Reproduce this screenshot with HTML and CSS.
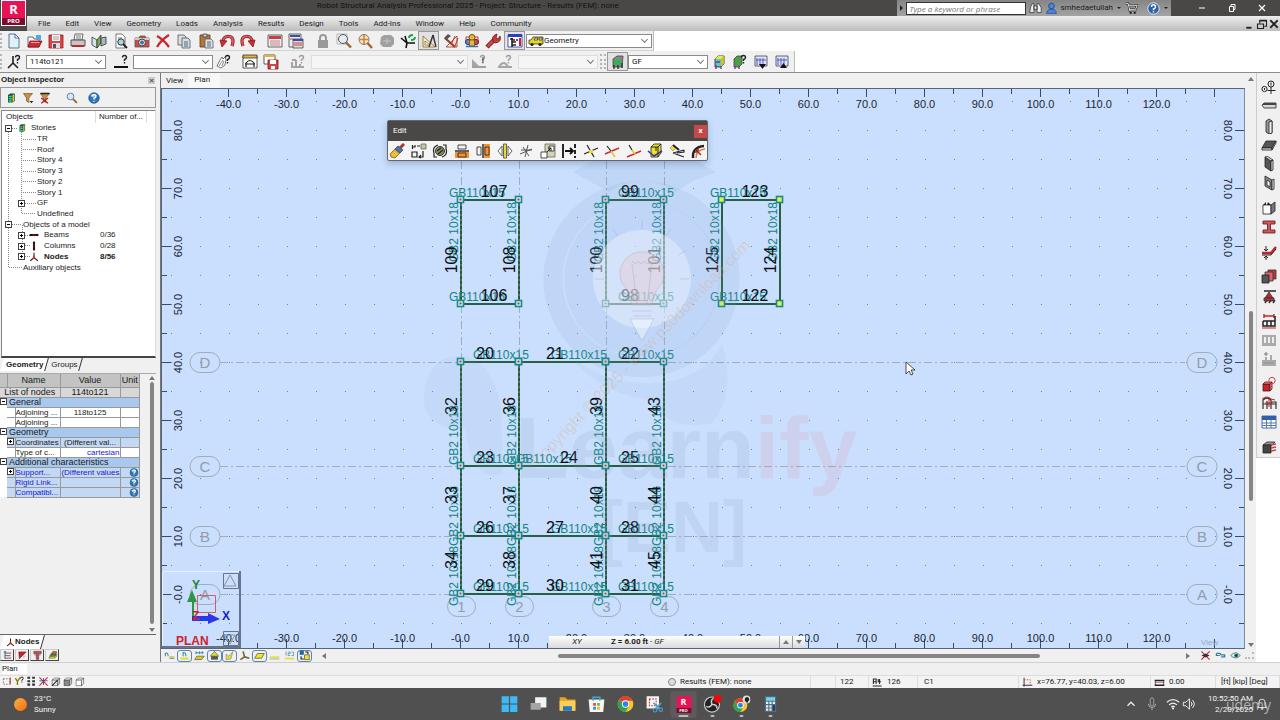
FILE: index.html
```html
<!DOCTYPE html>
<html lang="en">
<head>
    <meta charset="UTF-8">
    <title>Robot Structural Analysis Professional 2025</title>
    <link rel="stylesheet" href="styles.css">
</head>
<body>

    <!-- Title bar and main menu -->
    <header class="header">
        <div class="logo"><b>R</b><small>PRO</small></div>
        <div class="titlebar">
            <div class="title">Robot Structural Analysis Professional 2025 - Project: Structure - Results (FEM): none</div>
            <div class="infobar">
                <span class="caret-right"></span>
                <input type="text" placeholder="Type a keyword or phrase" aria-label="Search">
                <button data-icon="binoculars" aria-label="Find"></button>
                <button class="user"><i data-icon="user"></i>smhedaetullah<span class="caret"></span></button>
                <button data-icon="cart" aria-label="Store"></button>
                <button class="help"><i data-icon="help"></i><span class="caret"></span></button>
            </div>
            <div class="window-buttons">
                <button data-icon="min" aria-label="Minimize"></button>
                <button data-icon="restore" aria-label="Restore"></button>
                <button data-icon="close" aria-label="Close"></button>
            </div>
        </div>
        <nav class="menubar">
            <a href="#">File</a>
            <a href="#">Edit</a>
            <a href="#">View</a>
            <a href="#">Geometry</a>
            <a href="#">Loads</a>
            <a href="#">Analysis</a>
            <a href="#">Results</a>
            <a href="#">Design</a>
            <a href="#">Tools</a>
            <a href="#">Add-Ins</a>
            <a href="#">Window</a>
            <a href="#">Help</a>
            <a href="#">Community</a>
            <div class="mdi-buttons">
                <button data-icon="mdimin" aria-label="Minimize view"></button>
                <button data-icon="mdirestore" aria-label="Restore view"></button>
                <button data-icon="mdiclose" aria-label="Close view"></button>
            </div>
        </nav>
    </header>

    <!-- Standard toolbar -->
    <div class="toolbar">
        <span class="handle"></span>
        <div class="group"><button data-icon="new"></button><button data-icon="open"></button><button data-icon="save"></button></div>
        <div class="group"><button data-icon="print"></button><button data-icon="book"></button><button data-icon="preview"></button></div>
        <div class="group"><button data-icon="camera"></button><button data-icon="delete"></button><button data-icon="copy"></button></div>
        <div class="group"><button data-icon="paste"></button><button data-icon="undo"></button><button data-icon="redo"></button></div>
        <div class="group spaced"><button data-icon="calc"></button><button data-icon="calc2"></button></div>
        <div class="group spaced"><button data-icon="lock"></button><button data-icon="zoom"></button><button data-icon="zoomall"></button></div>
        <div class="group"><button data-icon="blob"></button><button data-icon="refresh"></button><button data-icon="triangle" class="active"></button></div>
        <div class="group"><button data-icon="hammer"></button><button data-icon="gizmo"></button><button data-icon="wrench"></button></div>
        <div class="group"><button data-icon="inspector" class="active"></button></div>
        <div class="combo layout">
            <i data-icon="car"></i>
            <select aria-label="Layout"><option>Geometry</option></select>
        </div>
    </div>

    <!-- Selection and stories toolbars -->
    <div class="toolbar selection">
        <span class="handle"></span>
        <button data-icon="nodesel"></button>
        <div class="combo"><select aria-label="Node selection"><option>114to121</option></select></div>
        <button data-icon="barsel" class="after-combo"></button>
        <div class="combo"><select aria-label="Bar selection"><option></option></select></div>
        <button data-icon="hand"></button>
        <div class="group spaced"><button data-icon="frame"></button><button data-icon="framesave"></button></div>
        <div class="group spaced"><button data-icon="loadcase"></button></div>
        <div class="combo disabled wide"><select aria-label="Load case" disabled><option></option></select></div>
        <button data-icon="mode"></button>
        <div class="group spaced"><button data-icon="mode2"></button></div>
        <div class="combo disabled"><select aria-label="Mode" disabled><option></option></select></div>
        <span class="handle double"></span>
        <button data-icon="building" class="active"></button>
        <div class="combo story"><select aria-label="Story"><option>GF</option></select></div>
        <button data-icon="storycolor"></button>
        <button data-icon="storyask"></button>
        <button data-icon="storydown"></button>
        <button data-icon="storyup"></button>
    </div>

    <main class="main">
        <!-- Object inspector -->
        <aside class="inspector">
            <h2>Object Inspector <button aria-label="Close inspector">×</button></h2>
            <div class="inspector-tools">
                <button data-icon="story"></button>
                <button data-icon="filter"></button>
                <button data-icon="filterx"></button>
                <button data-icon="lens"></button>
                <button data-icon="helpball"></button>
            </div>
            <div class="tree-box">
                <div class="tree-head"><span>Objects</span><span>Number of...</span></div>
                <ul class="tree">
                    <li class="l1"><i class="box minus"></i><i data-icon="story"></i>Stories</li>
                    <li class="l3">TR</li>
                    <li class="l3">Roof</li>
                    <li class="l3">Story 4</li>
                    <li class="l3">Story 3</li>
                    <li class="l3">Story 2</li>
                    <li class="l3">Story 1</li>
                    <li class="l2"><i class="box"></i>GF</li>
                    <li class="l3">Undefined</li>
                    <li class="l1 root"><i class="box minus"></i>Objects of a model</li>
                    <li class="l2 obj"><i class="box"></i><i data-icon="beam"></i>Beams<span>0/36</span></li>
                    <li class="l2 obj"><i class="box"></i><i data-icon="column"></i>Columns<span>0/28</span></li>
                    <li class="l2 obj picked"><i class="box"></i><i data-icon="node"></i>Nodes<span>8/56</span></li>
                    <li class="aux">Auxiliary objects</li>
                </ul>
                <svg class="tree-lines" aria-hidden="true"><path d="M6.500 5V144.500H20M19.500 9V90.500H34M8 5.500H16M21 16.500H34M21 26.500H34M21 37.500H34M21 48.500H34M21 58.500H34M21 69.500H34M21 80.500H34M8 101.500H20M20.500 102V133M21 112.500H28M21 122.500H28M21 133.500H28"/></svg>
            </div>
            <div class="tabs"><button class="on">Geometry</button><button>Groups</button></div>

            <div class="props-box">
                <table class="props">
                    <colgroup><col class="c1"><col class="c2"><col class="c3"><col class="c4"><col class="c5"></colgroup>
                    <tr class="head"><th></th><th colspan="2">Name</th><th>Value</th><th>Unit</th></tr>
                    <tr class="list"><td colspan="3">List of nodes</td><td>114to121</td><td></td></tr>
                    <tr class="section"><td><i class="box minus"></i></td><td colspan="4">General</td></tr>
                    <tr><td></td><td></td><td>Adjoining ...</td><td class="mid">118to125</td><td></td></tr>
                    <tr><td></td><td></td><td>Adjoining ...</td><td></td><td></td></tr>
                    <tr class="section"><td><i class="box minus"></i></td><td colspan="4">Geometry</td></tr>
                    <tr class="blue"><td></td><td><i class="box"></i></td><td>Coordinates</td><td class="mid">(Different val...</td><td></td></tr>
                    <tr><td></td><td></td><td>Type of c...</td><td class="end link">cartesian</td><td></td></tr>
                    <tr class="section"><td><i class="box minus"></i></td><td colspan="4">Additional characteristics</td></tr>
                    <tr class="blue"><td></td><td><i class="box"></i></td><td class="link">Support...</td><td class="end link">(Different values</td><td class="end"><i data-icon="helpball"></i></td></tr>
                    <tr class="blue"><td></td><td></td><td class="link">Rigid Link...</td><td></td><td class="end"><i data-icon="helpball"></i></td></tr>
                    <tr class="blue"><td></td><td></td><td class="link">Compatibl...</td><td></td><td class="end"><i data-icon="helpball"></i></td></tr>
                </table>
                <div class="vscroll"><span class="up"></span><span class="thumb"></span><span class="down"></span></div>
            </div>
            <div class="tabs bottom"><button class="on"><i data-icon="node"></i>Nodes</button></div>
            <div class="inspector-icons">
                <button data-icon="treeview"></button><button data-icon="redsec"></button><button data-icon="redcol"></button><button data-icon="layers"></button>
            </div>
        </aside>

        <!-- Plan view -->
        <section class="view">
            <div class="view-tabs"><button>View</button><button class="on">Plan</button></div>
            <div class="canvas-row">
                <div class="canvas" id="canvas">
                    <svg id="plan" class="plan" role="img" aria-label="Plan at Z = 6.00 ft"></svg>

                    <div class="palette">
                        <div class="palette-title">Edit<button aria-label="Close palette">x</button></div>
                        <div class="palette-tools">
                            <button data-icon="brush"></button><button data-icon="move"></button><button data-icon="rotate"></button>
                            <button data-icon="mirrorh"></button><button data-icon="mirrorv"></button><button data-icon="mirror"></button>
                            <button data-icon="star"></button><button data-icon="scale"></button><button data-icon="extendto"></button>
                            <button data-icon="intersect"></button><button data-icon="trim"></button><button data-icon="extend"></button>
                            <button data-icon="cube"></button><button data-icon="chamfer"></button><button data-icon="fillet"></button>
                        </div>
                    </div>

                    <div class="level">
                        <span class="plane">XY</span>
                        <span class="z"><b>Z = 6.00 ft</b> - <em>GF</em></span>
                        <button aria-label="Level up"><span class="up"></span></button>
                        <button aria-label="Level down"><span class="down"></span></button>
                    </div>
                </div>
                <div class="vscroll main-scroll"><span class="up"></span><span class="thumb"></span><span class="down"></span></div>
            </div>
            <div class="view-bar">
                <button data-icon="vnode"></button>
                <button data-icon="vnum" class="round"></button>
                <button data-icon="vsec"></button>
                <button data-icon="vsup" class="round"></button>
                <button data-icon="vload" class="round"></button>
                <button data-icon="vaxis"></button>
                <button data-icon="vpanel" class="round"></button>
                <button data-icon="vyellow"></button>
                <button data-icon="v123"></button>
                <button data-icon="vattr" class="round"></button>
                <div class="hscroll"><span class="left"></span><span class="track"><span class="thumb"></span></span><span class="right"></span></div>
                <button data-icon="cutoff"></button>
                <button data-icon="glasses"></button>
                <button data-icon="eye"></button>
                <span class="grip"></span>
            </div>
        </section>

        <!-- Structure definition tools -->
        <div class="side">
            <div class="side-tools">
                <button data-icon="axes"></button>
                <button data-icon="sbeam"></button>
                <button data-icon="scol"></button>
                <button data-icon="slab"></button>
                <button data-icon="wall"></button>
                <button data-icon="opening"></button>
                <button data-icon="solid" class="sep"></button>
                <button data-icon="isection"></button>
                <button data-icon="offset" class="sep"></button>
                <button data-icon="thick" class="sep"></button>
                <button data-icon="support"></button>
                <button data-icon="loads" class="sep"></button>
                <button data-icon="graytable"></button>
                <button data-icon="graychart"></button>
                <button data-icon="redcube" class="sep"></button>
                <button data-icon="redframe"></button>
                <button data-icon="table"></button>
                <button data-icon="library" class="sep"></button>
            </div>
        </div>
    </main>

    <div class="view-name"><span>Plan</span></div>

    <!-- Status bar -->
    <footer class="status">
        <div class="status-icons">
            <i data-icon="st1"></i><i data-icon="st2"></i><i data-icon="st3"></i><i data-icon="st4"></i><i data-icon="boxa"></i><i data-icon="boxb"></i><i data-icon="boxc"></i>
        </div>
        <div class="cell result"><i class="led"></i>Results (FEM): none</div>
        <div class="cell blank"></div>
        <div class="cell count">122</div>
        <div class="cell bars"><i data-icon="barnum"></i>126</div>
        <div class="cell case">C1</div>
        <div class="cell coords"><i data-icon="coord"></i>x=76.77, y=40.03, z=6.00</div>
        <div class="cell dist"><i data-icon="dist"></i>0.00</div>
        <div class="cell units">[ft] [kip] [Deg]</div>
    </footer>

    <!-- Windows taskbar -->
    <div class="taskbar">
        <div class="weather"><span class="sun"></span><div>23°C<br>Sunny</div></div>
        <div class="apps">
            <button data-icon="windows"></button>
            <button data-icon="taskview"></button>
            <button data-icon="folder"></button>
            <button data-icon="store"></button>
            <button data-icon="chrome"></button>
            <button data-icon="snip"></button>
            <button class="current"><span class="logo mini"><b>R</b><small>PRO</small></span></button>
            <button data-icon="obs" class="running"></button>
            <button data-icon="chrome2" class="running"></button>
            <button data-icon="calculator" class="running"></button>
        </div>
        <div class="tray">
            <i data-icon="chevron"></i><i data-icon="mic"></i><i data-icon="wifi"></i><i data-icon="sound"></i>
            <div class="clock">10:52:50 AM<br>2/20/2025</div>
            <i data-icon="bell"></i>
            <span class="brand">ûdemy</span>
        </div>
    </div>

    <script src="icons.js"></script>
    <script src="plan.js"></script>
</body>
</html>
```
FILE: styles.css
```css
/* General */
* {
    box-sizing: border-box;
}

body {
    margin: 0;
    height: 100vh;
    display: flex;
    flex-direction: column;
    overflow: hidden;
    background: #fff;
    color: #1a1a1a;
    font-family: Roboto, "Open Sans", sans-serif;
    font-size: 8px;
    line-height: 10px;
}

button {
    margin: 0;
    padding: 0;
    border: 0;
    background: none;
    color: inherit;
    font: inherit;
    display: flex;
    align-items: center;
    justify-content: center;
    flex-shrink: 0;
}

i {
    display: inline-flex;
    font-style: normal;
    flex-shrink: 0;
}

i svg,
button svg {
    width: 16px;
    height: 16px;
    display: block;
}

/* Header */
.header {
    display: grid;
    grid-template-columns: 27px 1fr;
    grid-template-rows: 16px 15px;
    background: #4a4846;
}

.logo {
    grid-row: 1 / 3;
    margin: 0 1px 5px;
    display: flex;
    flex-direction: column;
    align-items: center;
    background: linear-gradient(#e61455 70%, #7d0a30 70%);
    border: 1px solid #fff;
    color: #fff;
    font-family: "Open Sans", sans-serif;
}

.logo b {
    font-size: 13px;
    line-height: 17px;
}

.logo small {
    font-size: 6px;
    line-height: 7px;
    font-weight: bold;
}

.titlebar {
    display: flex;
    align-items: center;
    background: #4a4846;
}

.title {
    flex: 1;
    padding-left: 290px;
    line-height: 11px;
    align-self: flex-start;
    color: #111;
    white-space: nowrap;
}

.infobar {
    display: flex;
    align-items: center;
    align-self: flex-start;
    height: 16px;
    padding-right: 2px;
    gap: 3px;
    background: linear-gradient(#858585, #a3a3a3);
    white-space: nowrap;
}

.infobar input {
    width: 120px;
    height: 13px;
    padding: 0 2px;
    border: 1px solid #333;
    background: #fff;
    font: italic 8px/10px "Open Sans", sans-serif;
}

.infobar svg {
    width: 13px;
    height: 13px;
}

.infobar .user,
.infobar .help {
    gap: 2px;
}

.infobar .help {
    margin-left: 6px;
}

.caret-right {
    margin-left: 3px;
    border: 3px solid transparent;
    border-left-color: #222;
    border-right: 0;
}

.caret {
    margin: 2px 1px 0 2px;
    border: 2px solid transparent;
    border-top-color: #222;
}

.window-buttons {
    display: flex;
    gap: 14px;
    padding: 0 10px 0 23px;
    color: #fff;
}

.menubar {
    display: flex;
    align-items: center;
    gap: 15px;
    padding-left: 11px;
    background: linear-gradient(#ededed, #bdbdbd);
}

.menubar a {
    color: #222;
    text-decoration: none;
}

.mdi-buttons {
    display: flex;
    margin-left: auto;
}

.mdi-buttons svg {
    width: 12px;
    height: 12px;
}

/* Toolbars */
.toolbar {
    align-self: flex-start;
    display: flex;
    align-items: center;
    height: 20px;
    padding-right: 1px;
    background: #f0f0f0;
    border-right: 1px solid #bbb;
    border-bottom: 1px solid #d4d4d4;
}

.toolbar.selection {
    height: 21px;
    padding-right: 2px;
    border-bottom: 0;
}

.toolbar button {
    width: 21px;
    height: 19px;
}

.toolbar button.active {
    background: #e2e2e2;
    border: 1px solid #999;
}

.group {
    display: flex;
    margin-right: 1px;
}

.group.spaced {
    margin-left: 5px;
}

.handle {
    width: 3px;
    height: 15px;
    border-left: 2px dotted #b4b4b4;
}

.handle.double {
    width: 6px;
    margin: 0 1px 0 2px;
    border-right: 2px dotted #b4b4b4;
}

.combo {
    position: relative;
    width: 80px;
    height: 14px;
    display: flex;
    margin-left: 2px;
    background: #fff;
    border: 1px solid #8a8a8a;
}

.combo select {
    appearance: none;
    flex: 1;
    min-width: 0;
    padding: 0 3px;
    border: 0;
    background: none;
    color: #111;
    font: 8px/10px Roboto, sans-serif;
}

.combo::after {
    content: '';
    position: absolute;
    top: 2px;
    right: 4px;
    width: 4px;
    height: 4px;
    border: solid #777;
    border-width: 0 1px 1px 0;
    transform: rotate(45deg);
}

.combo.layout {
    width: 126px;
    margin-left: 0;
}

.combo.layout i {
    margin: -2px 0 0 1px;
}

.combo.layout select {
    padding-left: 0;
}

.combo.disabled {
    background: #f5f5f5;
    border-color: #ddd;
}

.combo.wide {
    width: 157px;
}

.combo.story {
    margin-left: 0;
}

.after-combo {
    margin-left: 4px;
}

/* Main area */
.main {
    flex: 1;
    min-height: 0;
    display: flex;
    border-top: 1px solid #8c8c8c;
}

/* Object inspector */
.inspector {
    width: 161px;
    display: flex;
    flex-direction: column;
    background: #f0f0f0;
    border-right: 1px solid #777;
    font-family: "Liberation Sans", Arial, sans-serif;
}

.inspector h2 {
    display: flex;
    align-items: center;
    justify-content: space-between;
    height: 14px;
    margin: 0;
    padding: 0 5px 0 1px;
    font-size: 8px;
    line-height: 14px;
}

.inspector h2 button {
    width: 7px;
    height: 7px;
    background: #ccc;
    color: #555;
    line-height: 7px;
}

.inspector-tools {
    display: flex;
    height: 21px;
    margin-right: 4px;
    padding-left: 1px;
    border: 1px solid #999;
}

.inspector-tools button {
    width: 17px;
}

.inspector-tools svg {
    width: 12px;
    height: 12px;
}

.inspector-tools button:nth-child(4) {
    margin-left: 10px;
}

.inspector-tools button:nth-child(5) {
    margin-left: 5px;
}

.tree-box {
    position: relative;
    flex: 0 0 248px;
    margin: 2px 4px 0 1px;
    background: #fff;
    border: 1px solid #888;
    border-bottom: 2px solid #444;
    border-right-color: #ddd;
}

.tree-head {
    display: flex;
    height: 12px;
    line-height: 12px;
}

.tree-head span:first-child {
    width: 94px;
    padding-left: 4px;
    border-right: 1px solid #ddd;
}

.tree-head span:last-child {
    padding: 0 3px;
    border-right: 1px solid #ddd;
}

.tree {
    display: grid;
    grid-auto-rows: 1fr;
    height: 150px;
    margin: 0;
    padding: 0;
    list-style: none;
}

.tree li {
    position: relative;
    z-index: 1;
    display: flex;
    align-items: center;
}

.tree li i svg {
    width: 10px;
    height: 10px;
}

.tree .l1 {
    padding-left: 3px;
}

.tree .l1 i[data-icon] {
    margin: 0 4px 0 5px;
}

.tree .l1.root .box {
    margin-right: 11px;
}

.tree .l2 {
    padding-left: 16px;
}

.tree .l2 .box {
    margin-right: 12px;
}

.tree .l2.obj .box {
    margin-right: 4px;
}

.tree .l2.obj i[data-icon] {
    margin-right: 5px;
}

.tree .l3 {
    padding-left: 35px;
}

.tree .aux {
    padding-left: 21px;
}

.tree span {
    position: absolute;
    left: 98px;
}

.tree .picked {
    font-weight: bold;
}

.tree-lines {
    position: absolute;
    top: 12px;
    left: 0;
    width: 40px;
    height: 150px;
    fill: none;
    stroke: #888;
    stroke-dasharray: 1 1;
}

.box {
    position: relative;
    width: 7px;
    height: 7px;
    background: #fff;
    border: 1px solid #444;
}

.box::before,
.box:not(.minus)::after {
    content: '';
    position: absolute;
    top: 2px;
    left: 1px;
    width: 3px;
    height: 1px;
    background: #000;
}

.box:not(.minus)::after {
    transform: rotate(90deg);
}

.tabs {
    display: flex;
    height: 13px;
    margin-right: 4px;
    padding-left: 2px;
}

.tabs button {
    position: relative;
    z-index: 0;
    padding: 0 4px;
}

.tabs button::before {
    content: '';
    position: absolute;
    z-index: -1;
    inset: 0;
    border-right: 1px solid #333;
    transform: skewX(-16deg);
}

.tabs .on {
    font-weight: bold;
}

.tabs .on::before {
    background: #fff;
}

.tabs svg {
    width: 9px;
    height: 9px;
}

.props-box {
    flex: 1;
    min-height: 0;
    display: flex;
    justify-content: space-between;
    margin: 2px 4px 0 0;
    border-top: 1px solid #aaa;
    border-bottom: 1px solid #666;
}

.props {
    width: 140px;
    height: 123px;
    flex-shrink: 0;
    table-layout: fixed;
    border-collapse: collapse;
    line-height: 9px;
    white-space: nowrap;
}

.props .c1 {
    width: 7px;
}

.props .c2 {
    width: 8px;
}

.props .c3 {
    width: 45px;
}

.props .c4 {
    width: 60px;
}

.props td,
.props th {
    height: 10px;
    padding: 0;
    overflow: hidden;
    background: #fff;
    border: 1px solid #999;
    border-width: 0 1px 1px 0;
}

.props .head th {
    height: 13px;
    background: #c3c3c3;
    font-size: 9px;
    font-weight: normal;
}

.props .list td {
    background: #d8d8d8;
    text-align: center;
    font-size: 9px;
}

.props tr:not(.head) td:first-child:not([colspan]) {
    background: #fff;
    border: 0;
}

.props tr.section td:last-child {
    padding-left: 2px;
    background: #a9c8ee;
    font-size: 9px;
}

.props tr.blue td {
    background: #c3d9f3;
}

.props .mid {
    text-align: center;
}

.props .end {
    text-align: right;
}

.props .link {
    color: #1a1ad0;
}

.props i {
    vertical-align: top;
}

.props i svg {
    width: 10px;
    height: 9px;
}

.vscroll {
    display: flex;
    flex-direction: column;
    align-items: center;
    width: 9px;
    padding: 2px 0;
    background: #f0f0f0;
}

.up,
.down {
    border: 3px solid transparent;
}

.up {
    border-bottom: 4px solid #777;
    border-top: 0;
}

.down {
    border-top: 4px solid #777;
    border-bottom: 0;
}

.vscroll .thumb {
    flex: 1;
    width: 4px;
    margin: 2px 0 4px;
    border-radius: 2px;
    background: #858585;
}

.tabs.bottom {
    height: 14px;
}

.inspector-icons {
    display: flex;
    gap: 1px;
    height: 13px;
}

.inspector-icons button {
    width: 14px;
    height: 12px;
    border: 1px solid #ccc;
    border-right-color: #444;
    border-bottom-color: #444;
}

.inspector-icons svg {
    width: 11px;
    height: 10px;
}

/* Plan view */
.view {
    flex: 1;
    min-width: 0;
    display: flex;
    flex-direction: column;
    background: #f0f0f0;
}

.view-tabs {
    display: flex;
    height: 15px;
}

.view-tabs button {
    padding: 0 5px;
}

.view-tabs .on {
    padding: 0 10px 2px 6px;
    background: #f8f8f8;
}

.canvas-row {
    flex: 1;
    min-height: 0;
    display: flex;
}

.canvas {
    position: relative;
    flex: 1;
    min-width: 0;
    background: #c9dffd;
    border: 1px solid #57657c;
    border-right-color: #7d8ba3;
    overflow: hidden;
}

.plan {
    display: block;
    width: 100%;
    height: 100%;
    font-family: "Liberation Sans", Arial, sans-serif;
}

.plan .dot {
    fill: #6a7fc0;
}

.plan .tick {
    stroke: #3b4a66;
    fill: none;
}

.plan .ruler {
    fill: #1c2636;
    font-size: 11px;
    text-anchor: middle;
}

.plan .axis {
    stroke: #a3abb9;
    stroke-dasharray: 8 3 2 3;
}

.plan .bubble {
    fill: none;
    stroke: #a3abb9;
}

.plan .bubble-text {
    fill: #959ca8;
    font-size: 15px;
    text-anchor: middle;
}

.plan .member {
    stroke: #467a5c;
    stroke-width: 2;
}

.plan .member.plain {
    stroke: #2b5f45;
}

.plan .member-dash {
    stroke: #17301f;
    stroke-dasharray: 3 2;
}

.plan .section {
    fill: #128484;
    font-size: 12px;
}

.plan .number {
    fill: #0b0f14;
    font-size: 16px;
    text-anchor: middle;
}

.plan .node {
    fill: #e9f1fb;
    stroke: #168a8a;
}

.plan .node.selected {
    fill: #ecf04a;
}

.plan .node-dot {
    fill: #a03c3c;
}

.plan .mark {
    font-weight: bold;
}

.main-scroll {
    width: 11px;
    margin-top: -13px;
}

.main-scroll .thumb {
    flex: 0 0 190px;
    margin: 230px 0 auto;
}

/* Edit palette */
.palette {
    position: absolute;
    top: 31px;
    left: 225px;
    width: 321px;
    background: #f4f4f4;
    border: 1px solid #666;
    border-radius: 2px;
    box-shadow: 0 3px 6px rgba(60, 80, 120, 0.3);
}

.palette-title {
    display: flex;
    align-items: center;
    justify-content: space-between;
    height: 20px;
    padding-left: 5px;
    background: #4a4846;
    color: #fff;
}

.palette-title button {
    width: 13px;
    height: 13px;
    background: #c8474b;
    font-weight: bold;
}

.palette-tools {
    display: flex;
    justify-content: space-between;
    height: 19px;
    padding: 0 1px;
}

/* Level selector */
.level {
    position: absolute;
    left: 387px;
    bottom: 0;
    display: flex;
    align-items: center;
    width: 256px;
    height: 12px;
    background: linear-gradient(#fff, #dadada);
}

.level .plane {
    width: 56px;
    text-align: center;
    font-style: italic;
}

.level .z {
    flex: 1;
    padding-left: 6px;
}

.level button {
    width: 13px;
    height: 12px;
    border-left: 1px solid #999;
}

/* Bar under the plan */
.view-bar {
    display: flex;
    align-items: center;
    height: 13px;
    padding: 0 2px 0 1px;
}

.view-bar button {
    width: 15px;
    height: 12px;
}

.view-bar svg {
    width: 13px;
    height: 11px;
}

.view-bar .round {
    border: 1px solid #5b87ad;
    border-radius: 3px;
}

.hscroll {
    flex: 1;
    display: flex;
    align-items: center;
    margin: 0 8px 0 10px;
}

.hscroll .left,
.hscroll .right {
    border: 3px solid transparent;
}

.hscroll .left {
    border-right: 4px solid #777;
    border-left: 0;
}

.hscroll .right {
    border-left: 4px solid #777;
    border-right: 0;
}

.hscroll .track {
    flex: 1;
}

.hscroll .thumb {
    display: block;
    width: 56%;
    height: 4px;
    margin-left: 27%;
    border-radius: 2px;
    background: #858585;
}

.grip {
    width: 9px;
    height: 7px;
    margin-left: 2px;
    border-right: 2px dotted #bbb;
    border-bottom: 2px dotted #bbb;
}

/* Right toolbar */
.side {
    width: 24px;
    background: #fff;
}

.side-tools {
    display: flex;
    flex-direction: column;
    align-items: center;
    padding: 5px 0 1px;
    background: #f0f0f0;
    border: 1px solid #ccc;
    border-width: 0 0 1px 1px;
}

.side-tools button {
    height: 19px;
}

.side-tools .sep {
    margin-top: 6px;
}

/* Status area */
.view-name {
    height: 14px;
    padding: 1px 2px;
    background: #f0f0f0;
    border-top: 1px solid #d0d0d0;
    border-bottom: 1px solid #ddd;
}

.view-name span {
    display: block;
    width: 25px;
    background: #fff;
}

.status {
    display: flex;
    height: 12px;
    line-height: 12px;
    background: #f3f3f3;
    white-space: nowrap;
}

.status i svg {
    width: 11px;
    height: 11px;
}

.status-icons {
    flex: 1;
    display: flex;
    gap: 1px;
    padding-left: 2px;
}

.cell {
    display: flex;
    align-items: center;
    gap: 4px;
    border-right: 1px solid #ddd;
}

.result {
    width: 143px;
}

.led {
    width: 8px;
    height: 8px;
    border: 1px solid #888;
    border-radius: 50%;
    background: #ddd;
}

.blank {
    width: 25px;
}

.count {
    width: 33px;
    padding-left: 4px;
}

.bars {
    width: 49px;
    padding-left: 3px;
}

.case {
    width: 101px;
    padding-left: 6px;
}

.coords {
    width: 132px;
    padding-left: 3px;
}

.dist {
    width: 65px;
    padding-left: 3px;
}

.units {
    width: 64px;
    padding-left: 5px;
}

/* Taskbar */
.taskbar {
    position: relative;
    display: flex;
    align-items: center;
    justify-content: space-between;
    height: 32px;
    padding: 0 11px 0 14px;
    background: #505050;
    color: #f4f4f4;
}

.weather {
    display: flex;
    align-items: center;
    gap: 7px;
    line-height: 11px;
}

.sun {
    width: 13px;
    height: 13px;
    border-radius: 50%;
    background: linear-gradient(135deg, #ffb13c, #ef6a1b);
}

.apps {
    position: absolute;
    left: 50%;
    display: flex;
    gap: 3px;
    transform: translateX(-50%);
}

.apps button {
    position: relative;
    width: 26px;
    height: 27px;
}

.apps svg {
    width: 18px;
    height: 18px;
}

.apps .current {
    background: #5e5a5b;
    border-radius: 3px;
}

.apps .current::after,
.apps .running::after {
    content: '';
    position: absolute;
    bottom: 1px;
    width: 4px;
    height: 2px;
    border-radius: 1px;
    background: #bbb;
}

.apps .current::after {
    width: 10px;
}

.logo.mini {
    width: 15px;
    height: 17px;
    margin: 0;
    border: 0;
}

.mini b {
    font-size: 9px;
    line-height: 12px;
}

.mini small {
    font-size: 4px;
    line-height: 5px;
}

.tray {
    position: relative;
    display: flex;
    align-items: center;
    gap: 2px;
}

.tray svg {
    width: 14px;
    height: 14px;
}

.tray i:nth-child(2) {
    margin: 0 5px;
}

.clock {
    margin-left: 10px;
    line-height: 11px;
    text-align: right;
}

.brand {
    position: absolute;
    right: -2px;
    top: 4px;
    color: rgba(255, 255, 255, 0.55);
    font: 14px/16px "Open Sans", sans-serif;
}
```
FILE: icons.js
```js
// Icon shapes, all drawn on a 16x16 box
const box3d = (a, b, c) => `<g stroke="#222" stroke-width=".7"><path fill="${a}" d="M3 6l3-3h8l-3 3z"/><path fill="${b}" d="M3 6h8v8H3z"/><path fill="${c}" d="M11 6l3-3v8l-3 3z"/></g>`;
const line = (d, color = '#222', width = 1) => `<path d="${d}" fill="none" stroke="${color}" stroke-width="${width}"/>`;
const fill = (d, color, stroke = 'none') => `<path d="${d}" fill="${color}" stroke="${stroke}" stroke-width=".8"/>`;
const circle = (x, y, r, color, stroke = 'none') => `<circle cx="${x}" cy="${y}" r="${r}" fill="${color}" stroke="${stroke}"/>`;
const ask = line('M9.500 3.500Q9.500 1.500 11.500 1.500T13.500 3.500Q13.500 5 11.500 5.500V7M11.500 8V9.500', '#222', 1.4);

const tower = fill('M4 4l3-2h6v10l-3 2H4z', '#1f4b45') + fill('M5 5h4v2H5zM5 8h4v2H5zM5 11h4v2H5z', '#2fe07a') + fill('M10 4l2-1v9l-2 1z', '#e5cf2c');
const sheet = fill('M4 1h6l3 3v11H4z', '#fff', '#555');
const chromeIcon = circle(8, 8, 7, '#f7c729') + fill('M8 8L2 4.500A7 7 0 0 1 14.500 5H8z', '#e0402f') + fill('M2 4.500A7 7 0 0 0 8 15l3-5.500L8 8z', '#2fa24f') + circle(8, 8, 3.3, '#fff') + circle(8, 8, 2.5, '#3b7ded');

const icons = {
    binoculars: fill('M2 6l2-4h2v11H1zM10 2h2l3 5v6h-5zM6 5h4v4H6z', '#eee', '#222'),
    user: circle(8, 5, 3.5, '#4a86d8', '#17438c') + fill('M2 14q0-5 6-5t6 5z', '#4a86d8', '#17438c'),
    cart: line('M1 2h3l2 9h8M4.500 4H15l-2 5H6', '#222', 2.6) + line('M1 2h3l2 9h8M4.500 4H15l-2 5H6', '#e8e8e8', 1.2) + circle(7, 13.500, 1.4, '#222') + circle(12, 13.500, 1.4, '#222'),
    help: circle(8, 8, 7, '#2c62ad', '#fff') + line('M5.500 6Q5.500 3.500 8 3.500T10.500 6Q10.500 7.500 8 8.500V10M8 11.500V13', '#fff', 1.8),
    helpball: circle(8, 8, 7, '#3076ba', '#1c4e87') + fill('M3 5q4-5 9-1l-4 4z', '#8fc3ee') + line('M5.500 6Q5.500 3.500 8 3.500T10.500 6Q10.500 7.500 8 8.500V10M8 11.500V13', '#fff', 1.8),
    min: line('M5 8h6', '#fff'),
    restore: line('M5.500 6.500h4v5h-4zM7 6.500V4.500h4v5h-1.500', '#fff'),
    close: line('M5 5l6 6M11 5l-6 6', '#fff', 1.2),
    mdimin: line('M3 13h7', '#222', 2.5),
    mdirestore: line('M2 8h8v6H2zM5 7V3h9v8h-3M5 4h9', '#222', 1.5),
    mdiclose: line('M3 3l10 10M13 3L3 13', '#222', 2.4),

    // standard toolbar
    new: fill('M3 1h6l4 4v10H3z', '#dff1fb', '#37586e') + fill('M9 1v4h4z', '#fff', '#37586e'),
    open: fill('M1 4h5l1 2h5v8H1z', '#fff', '#444') + fill('M9 2h5v5H9z', '#53a9d9') + fill('M3 8h12l-3 6H1z', '#d8272f', '#7c1217') + fill('M4 9h9l-1 1H4z', '#f2a2a0'),
    save: fill('M1 2h14v13H1z', '#dc4448', '#8d1d20') + fill('M4 2h8v6H4z', '#fff') + fill('M4 10h8v5H4z', '#ddd') + fill('M5 11h3v4H5z', '#555') + line('M5 4h6M5 6h6', '#999'),
    print: fill('M5 1h8l-1 6H4z', '#fff', '#444') + fill('M1 7h14v6H1z', '#c9c4c2', '#333') + fill('M2 12h12v2H2z', '#b22e33') + line('M6 3h5M6 5h5', '#777'),
    book: fill('M1 4l5 3v8L1 12z', '#cde7f5', '#333') + fill('M6 7l4-5v8l-4 5z', '#83a84a', '#333') + fill('M10 5l5-1v7l-5 2z', '#a4b7c6', '#333'),
    preview: sheet + line('M6 5h4M6 7h3', '#777') + circle(9, 9, 3.2, '#a9d5ea', '#333') + line('M11 11l4 4', '#222', 2),
    camera: fill('M1 5h4l1-2h5l1 2h3v9H1z', '#d4484a', '#555') + fill('M1 5h14v2H1z', '#ccc') + circle(8, 9.500, 3.5, '#ddd', '#444') + circle(8, 9.500, 2, '#397aa3'),
    delete: line('M2 3q7 4 12 11M14 2Q6 7 2 14', '#c9252c', 2.2),
    copy: fill('M2 2h6l2 2v8H2z', '#ddd', '#555') + fill('M6 5h6l2 2v8H6z', '#cfdfe6', '#555') + line('M8 9h4M8 11h4M8 13h4', '#567'),
    paste: fill('M2 2h10v12H2z', '#b87738', '#55391e') + fill('M5 1h4v3H5z', '#ccc', '#444') + fill('M7 6h6l2 2v7H7z', '#dce6ec', '#555') + line('M9 9h4M9 11h4M9 13h4', '#567'),
    undo: line('M13 13Q16 4 10 3.500T4 9', '#7c1d22', 3.2) + line('M13 13Q16 4 10 3.500T4 9', '#e2565b', 1.8) + fill('M1 7l7 1-5 6z', '#cf2c33', '#7c1d22'),
    redo: line('M3 13Q0 4 6 3.500T12 9', '#7c1d22', 3.2) + line('M3 13Q0 4 6 3.500T12 9', '#e2565b', 1.8) + fill('M15 7l-7 1 5 6z', '#cf2c33', '#7c1d22'),
    calc: fill('M1 2h14v12H1z', '#eee', '#444') + fill('M2 3h12v3H2z', '#cb3d43') + line('M3 8h10M3 10h10M3 12h10', '#b88', 1.2),
    calc2: fill('M1 1h12v13H1z', '#eee', '#444') + fill('M2 2h10v2H2z', '#3a4ea3') + fill('M5 6h10v9H5z', '#ddd', '#444') + fill('M5 6h10v2H5z', '#3a4ea3') + line('M6 10h8M6 12h8M2 6h3', '#c44'),
    lock: line('M5 8V5q0-3 3-3t3 3v3', '#999', 2) + fill('M3 7h10v8H3z', '#999'),
    zoom: fill('M1 1h10v10H1z', 'none', '#aaa') + circle(7, 6, 4.5, '#e4edf1', '#555') + line('M10 9.500l5 5', '#9a6731', 2.4),
    zoomall: circle(7, 6.500, 5, '#f3e4c9', '#777') + line('M7 2v9M2.500 6.500h9', '#d98022', 1.5) + line('M10.500 10l4.500 5', '#9a6731', 2.4),
    blob: fill('M2 4l3-2h7l3 3v6l-3 3H4l-3-3z', '#a0a0a0') + line('M4 8h8M8 5v6', '#c4c4c4'),
    refresh: line('M1 5l6 5h8M7 10l-1 5M5 3l2 7', '#111', 1.6) + line('M9 5q0-3 4-3M15 4q0 3-4 3', '#1ea34b', 2),
    triangle: fill('M2 3v11h12z', '#f4e9cf', '#8a6b2a') + fill('M4 8v4h5z', '#fff', '#8a6b2a') + line('M12 2L8 14M12 2l3 12', '#333', 1.4),
    hammer: fill('M3 14L14 3v11z', '#f4e9cf', '#8b3a2a') + line('M2 5l10 9', '#a03428', 2) + fill('M1 5l4-4 3 2-5 4z', '#555') + line('M8 12l4-9M12 13l3-8', '#c33', 1),
    gizmo: line('M2 4v6M14 4v6M2 4h4M10 4h4', '#c33', 1) + circle(8, 4.500, 3, '#e6b93e', '#6c5117') + circle(4, 9, 2.6, '#6b84c6', '#273a70') + circle(12, 9, 2.6, '#cf4a43', '#70201d') + fill('M5.500 7h5v6h-5z', '#e6b93e', '#6c5117') + line('M2 13.500h12', '#3f6dbb', 1.5),
    wrench: line('M2 14l7-7', '#6a1519', 4.4) + line('M2.500 13.500L9 7', '#d0474c', 2.6) + fill('M8 8q-2-5 4-7l-1 4 2 1 2-3q2 6-5 7z', '#c8393e', '#6a1519'),
    inspector: fill('M1 2h14v12H1z', '#fff', '#2136a8') + fill('M1 1h14v3H1z', '#2a3fc1') + line('M3 6h3M5 5v9M5 9h4M5 12h4M9 7h2', '#222', 1.6) + fill('M12 5h2v8h-2zM6 6h2v2H6z', '#c22'),
    car: fill('M1 7h2l2-3h10v7H1z', '#e4d91b', '#333') + fill('M7 5h2.500v2H6zM11 5h3v2h-3z', '#fff', '#333') + circle(4, 11.500, 1.6, '#222') + circle(12, 11.500, 1.6, '#222'),

    // selection toolbar
    nodesel: line('M7 2v7L2 14M7 9l5 5', '#222', 1.6) + ask,
    barsel: line('M1 13h14', '#111', 2) + ask,
    hand: fill('M1 12l3-6 2-3 1 2 2-2 1 3-1 5-4 3z', '#fff', '#555') + line('M3 12l4-6M6 12l2-5', '#888') + ask,
    frame: fill('M1 2h14v12H1z', '#fff', '#333') + fill('M1 1h14v3H1z', '#e3b33a', '#333') + line('M4 13V9q4-5 8 0v4M3 10h10', '#222', 1.2),
    framesave: fill('M1 1h11v9H1z', '#fff', '#333') + fill('M1 1h11v2H1z', '#e3b33a') + fill('M5 6h10v9H5z', '#d64246', '#7b1518') + fill('M7 6h6v4H7zM8 12h4v3H8z', '#fff'),
    loadcase: line('M1 13h13M2 8v5M6 6v7M10 10v3M2 6h4', '#a4a4a4', 2) + `<g opacity=".4">${ask}</g>`,
    mode: fill('M1 14V5l9 9z', '#a6a6a6') + line('M1 13h14M12 3v6', '#a0a0a0', 2) + `<g opacity=".4">${ask}</g>`,
    mode2: line('M1 13h14M2 13q5-8 9 0', '#a6a6a6', 2) + `<g opacity=".4">${ask}</g>`,
    building: fill('M3 5l4-3h6l-1 11H3z', '#888', '#444') + fill('M4 6h7v5H4z', '#2cb553') + line('M4 15v-4M8 15v-4M12 14V9', '#333', 1.4),
    storycolor: fill('M4 5l3-3h6v8l-3 3H4z', '#4bd0c1', '#222') + fill('M4 5l3-3h6l-3 3z', '#f0ea35') + fill('M10 5l3-3v8l-3 3z', '#d4bb29') + line('M5 11v4M10 12v3M5 8h4', '#8b2ca5', 1.4),
    storyask: fill('M2 5l3-3h5v8l-3 3H2z', '#4d9c4a', '#444') + line('M3 12v3M7 12v3', '#8b2ca5', 1.4) + ask,
    storydown: fill('M2 2h12v10H2z', '#dfe3ff', '#444') + line('M4 4v7M7 4v7M10 4v7M3 6h10', '#555fba') + fill('M6 10h7l-3.500 5z', '#111'),
    storyup: fill('M2 2h12v10H2z', '#dfe3ff', '#444') + line('M4 4v7M7 4v7M10 4v7M3 6h10', '#555fba') + fill('M6 14h7l-3.500-5z', '#111'),

    // object inspector
    story: tower,
    filter: fill('M2 2h12L9 8v6l-3-2V8z', '#c8943f', '#60431b') + fill('M10 12h5l-2.500 3z', '#222'),
    filterx: fill('M2 2h12L9 8v6l-3-2V8z', '#c8943f', '#60431b') + line('M3 8l9 7M12 8l-9 7', '#b3202a', 2) + line('M2 2h12', '#222', 2),
    lens: circle(6, 6, 4.5, '#d5e6fa', '#47618f') + line('M9.500 9.500l5 5', '#9a6731', 2.6),
    beam: line('M1 8h14', '#111', 3.4) + line('M4 8h8', '#b22', 1.2),
    column: line('M8 1v14', '#111', 3.4) + line('M8 4v8', '#b22', 1.2),
    node: line('M8 1v8L2 14M8 9l6 5', '#222', 1.8) + fill('M8 5l3 6H5z', '#d12b30'),
    treeview: line('M4 2v12M4 5h5M4 9h5M4 13h6M2 3h4', '#456', 1.4) + line('M9 5h5M9 9h4M10 13h4', '#b66', 2),
    redsec: fill('M2 3h12L3 14z', '#c5242c', '#651015') + fill('M9 9h5l-5 5z', '#ccc'),
    redcol: fill('M2 2h12v4h-4v9H6V6H2z', '#c84a50', '#444') + line('M3 8h3M10 8h3', '#555'),
    layers: fill('M2 13l4-4h9l-3 4z', '#f2df2d', '#333') + fill('M3 10l4-4h8l-3 4z', '#37a34c', '#333') + fill('M5 7l4-5 6 1-3 4z', '#db5b2c', '#333'),

    // edit palette
    brush: fill('M1 11l5-5 5 4-5 5-4-1z', '#e9b028', '#8b6a18') + fill('M6 6l3-3 5 4-3 3z', '#4a76b0', '#23406a') + line('M11 5l4-4', '#a8392f', 3) + line('M3 11l3 2M5 9l3 3', '#f8df78'),
    move: fill('M10 1h5v5h-5z', '#c6c69a', '#666') + line('M1 4h3v-2M6 3h3M1 9h5v5H1zM12 8v6H9M10 12l-2 2 2 1M1.500 2v4', '#222', 1.2),
    rotate: circle(8, 8, 4.5, '#8b8b62', '#333') + line('M2 10q-2-6 4-8M14 6q2 6-4 8M11 2h3v4M5 14H2v-4M5 8l4-3M6 11l5-4', '#222', 1.2),
    mirrorh: fill('M1 9h14v6H1z', '#f2923a') + fill('M4 2h8v4H4zM4 10h8v4H4z', 'none', '#222') + line('M1 8h14', '#222', 1.4),
    mirrorv: fill('M9 1h6v14H9z', '#f2923a') + fill('M2 4h4v8H2zM10 4h4v8h-4z', 'none', '#222') + line('M8 1v14', '#222', 1.4),
    mirror: fill('M1 8l4-5v10zM15 8l-4-5v10z', '#fff', '#444') + fill('M6.500 1h3v14h-3z', '#e7dc2d', '#444'),
    star: line('M2 11l12-5M5 4l6 9M10 2L7 14M3 7h11', '#555', 1),
    scale: fill('M5 1h10v13H5z', '#d4d4b1', '#666') + fill('M9 3h5v5H9zM1 9h6v6H1z', '#fff', '#222') + line('M7 9l4-4M8 5h3v3', '#222'),
    extendto: line('M2 1v14M4 8h7M9 5l3 3-3 3', '#111', 1.8) + line('M14 1v14', '#111', 1.8).replace('/>', ' stroke-dasharray="4 2"/>'),
    intersect: line('M1 11l14-6M4 2l7 12', '#222', 1.2) + fill('M6 7h4v3H6z', '#e7dc2d'),
    trim: line('M1 11l14-6', '#cc2a30', 1.4) + line('M3 3l4 5', '#222', 1.2) + line('M7 8l4 6', '#e0cd2d', 1.6),
    extend: line('M1 14l14-6', '#cc2a30', 1.4) + line('M3 2l3 5', '#222', 1.2) + line('M6 7l3 4', '#e0cd2d', 1.8),
    cube: fill('M4 4l3-3h7v9l-3 4H4z', '#efe227', '#222') + line('M4 4h7l3-3M11 4v10M9 4v4', '#222') + line('M1 8l6 5 8-5', '#34379c', 1.6),
    chamfer: line('M4 10l11-3M4 10l11 4M15 7v2l-7 1', '#222', 1.2) + fill('M1 5l3-3 3 3-3 3z', '#efe227', '#999') + line('M4 2l6 5', '#222', 2),
    fillet: line('M3 15Q2 4 14 3', '#222', 2.4) + line('M6 15Q6 7 15 6', '#e07a35', 1.6) + line('M11 12L6 7M6 10V7h3', '#a22', 1.4),

    // bar under the plan
    vnode: line('M2 4v5M2 5q4-2 4 4M8 12h7', '#3c83b5', 1.5) + line('M8 10h7', '#cc2', 2),
    vnum: line('M6 3v6M6 5q4-3 4 4', '#3c83b5', 1.5) + fill('M2 11h12v3H2z', '#e7dc2d'),
    vsec: line('M2 4h12M3 2v4M8 2v4M12 2v4', '#3c83b5', 1.4) + fill('M4 9h11l-4 5H1z', '#d8cc25', '#333'),
    vsup: fill('M2 9l6-7 6 7z', '#e7dc2d', '#333') + fill('M3 9h10v5H3z', '#555'),
    vload: fill('M3 14V6l4 3 6-7-3 11z', '#e7dc2d', '#777'),
    vaxis: line('M6 2l2 8-6 4M8 10l7 2', '#6d6937', 2.4),
    vpanel: fill('M5 5h10l-4 7H1z', '#efe227', '#222'),
    vyellow: fill('M1 9h14v3H1z', '#e8df5b') + line('M1 13h14', '#999'),
    v123: line('M3 2v6M6 3h3v2H6v3h3M11 3h3v5h-3', '#4d94c5', 1.2) + fill('M1 11h14v3H1z', '#e8df5b'),
    vattr: fill('M1 1h6v6H1z', '#1a6b9b') + fill('M8 7h7v7H8z', '#efe227', '#222') + line('M3 9v4h4M9 3h4v3', '#222', 1.6),
    cutoff: line('M2 2l12 12M14 2L2 14', '#cc2a30', 1.8) + fill('M2 8l6-3 6 3-6 3z', '#333'),
    glasses: line('M2 5h5l2 2h5v3h-5M2 5v3h5', '#39789e', 1.8),
    eye: fill('M1 8q7-8 14 0-7 7-14 0z', '#d6f0f2', '#222') + circle(9, 8, 3, '#1791a4') + circle(9, 8, 1.3, '#111'),

    // structure tools
    axes: circle(10, 4, 3, 'none', '#222') + circle(3.500, 9, 2.6, 'none', '#222') + line('M10 7v7M6.500 10.500h8M10 2.500v3M3.500 8v2', '#222'),
    sbeam: fill('M1 6l2-2h12v5H3z', '#d8d8d8', '#222') + fill('M1 6l2-2h12v2H3z', '#444'),
    scol: fill('M5 3l3-2 3 2v12l-3 1-3-2z', '#999', '#222') + fill('M8 4l3-1v12l-3 1z', '#eee', '#222'),
    slab: fill('M5 4h10l-4 7H1z', '#555', '#222') + fill('M1 11h10v2H1zM11 11l4-7v2l-4 7z', '#ddd', '#222'),
    wall: fill('M4 1l6 4v10l-6-4z', '#555', '#222') + fill('M10 5l2-1v10l-2 1zM4 1l2-1 6 4-2 1z', '#ddd', '#222'),
    opening: fill('M4 1l7 4v10l-7-4z', '#888', '#222') + fill('M6 5l3 2v5L6 10z', '#fff', '#222') + fill('M11 5l2-1v10l-2 1z', '#ddd', '#222'),
    solid: fill('M2 5h8v9H2z', '#fff', '#222') + fill('M10 5l4-3v9l-4 3z', '#777', '#222') + fill('M2 5l3-3v3zM6 5l1-3 3 3z', '#222'),
    isection: fill('M2 2h12v3H9.500v6H14v3H2v-3h4.500V5H2z', '#d1555a', '#5e1316'),
    offset: line('M1 9h9l5-6', '#c2242b', 2.4) + line('M1 11h9l5-6M5 2v5M5 12v4M3 5l2 2 2-2M3 14l2-2 2 2', '#222'),
    thick: fill('M7 1h8v9H7z', '#c5353b', '#333') + fill('M4 3h8v9H4z', '#d8656a', '#333') + fill('M1 6h7v8H1z', '#555', '#222'),
    support: line('M3 3h12', '#333', 1.6) + fill('M8 4l4 6H4z', '#c5242c', '#333') + fill('M3 10h10v3H3z', '#b5353b', '#333') + line('M4 15l2-3M8 15l2-3M12 15l2-3', '#333', 1.4),
    loads: line('M3 3h10M3 1v4M13 1v4', '#c2242b', 1.4) + line('M2 8v5h12V3M6 8v5M10 8v5M2 8h12', '#222', 1.5) + line('M1 15h14', '#c2242b'),
    graytable: fill('M1 3h14v11H1z', '#aaa') + fill('M3 5h2v6H3zM7 5h2v6H7zM11 5h2v6h-2z', '#eee'),
    graychart: fill('M1 9h3V6h2v3h3V4h2v5h4v6H1z', '#aaa') + line('M3 3h4M5 1v4M3 12h10', '#999', 1.4),
    redcube: fill('M2 8h7v7H2z', '#c5242c', '#5e1316') + fill('M2 8l2-2h7L9 8zM9 8l2-2v7l-2 2z', '#e88', '#5e1316') + circle(11, 4.500, 3.2, 'none', '#c44'),
    redframe: line('M2 14V5q4-4 8 0v9M6 14V6M10 7h5v7M2 9h13', '#333', 1.2) + line('M1 4q5-4 9 0l4 1M4 8h8M8 4v8', '#c2242b', 1),
    table: fill('M1 2h14v12H1z', '#fff', '#2b4c88') + fill('M1 2h14v4H1z', '#2f5faf') + line('M1 9h14M1 11.500h14M5.500 6v8M10 6v8', '#57a'),
    library: fill('M2 6l4-3h8l-3 3z', '#999', '#222') + fill('M2 6h8v8H2z', '#444', '#222') + line('M10 6l5-1M10 9l5-1M10 12l5-1', '#c44', 1.3),

    // status bar
    st1: line('M2 4h9v8H2z', '#444').replace('/>', ' stroke-dasharray="2 2"/>') + line('M12 2v10', '#c33', 1.6),
    st2: line('M2 3l3 5 4-6M5 8v5', '#887f10', 2) + ask,
    st3: line('M4 1v14M11 1v14', '#333', 4).replace('/>', ' stroke-dasharray="3 2"/>'),
    st4: line('M2 2l12 12M14 2L2 14', '#c22c44', 1.6) + line('M2 7h12M8 3v10', '#448', 1.2),
    boxa: box3d('#fff', '#eee', '#ccc') + line('M3 14l8-8', '#222', 1.5),
    boxb: box3d('#fff', '#888', '#ccc'),
    boxc: box3d('#fff', '#fff', '#eee'),
    barnum: line('M2 10V3h4v7M2 7h4M9 3v4h4M11 3v7M1 13h13', '#222', 1.5),
    coord: line('M3 1v13M1 12h14', '#222', 1.3) + line('M3 4h9v8', '#c44', 1.4).replace('/>', ' stroke-dasharray="2 2"/>'),
    dist: line('M1 5h14M1 12h14', '#222', 2.2) + line('M2 8h12', '#c44', 1) + line('M2 5v7M14 5v7', '#222'),

    // taskbar
    windows: fill('M1 1h6.500v6.500H1zM8.500 1H15v6.500H8.500zM1 8.500h6.500V15H1zM8.500 8.500H15V15H8.500z', '#3fb8f3'),
    taskview: fill('M5 2h10v9H5z', '#f3f3f3') + fill('M1 7h9v6H1z', '#a5a5a5'),
    folder: fill('M1 2h5l2 2h7v10H1z', '#e2a327') + fill('M1 5h14v9H1z', '#fbce55') + fill('M4 10h8v4H4z', '#2279c9'),
    store: fill('M1 4h14l-1 11H2z', '#f5f5f5') + line('M5 5V2h6v3', '#3ea9d3', 1.4) + fill('M5 7h2.500v2.500H5z', '#e8503b') + fill('M8.500 7H11v2.500H8.500z', '#7ab93c') + fill('M5 10.500h2.500V13H5z', '#3592dd') + fill('M8.500 10.500H11V13H8.500z', '#f3b62c'),
    chrome: chromeIcon,
    snip: fill('M1 1h11v11H1z', '#f5f5f5') + line('M3.500 3.500h6v6h-6z', '#cc3b33').replace('/>', ' stroke-dasharray="1.5 1"/>') + line('M7 7l6 5M14 7l-5 5', '#4b9fca', 1.4) + circle(8.500, 13.500, 1.6, 'none', '#4b9fca') + circle(13.500, 13, 1.6, 'none', '#4b9fca'),
    obs: circle(7.500, 8.500, 6.7, '#222', '#ccc') + line('M7.500 8.500Q6 4 9 3M7.500 8.500Q12 8 12 12M7.500 8.500Q5 12 2.500 10', '#ccc', 1.4) + circle(12.500, 3.500, 3.400, '#f00'),
    chrome2: `<g transform="translate(0 2) scale(.88)">${chromeIcon}</g>` + circle(12.500, 4, 3.5, '#ddd') + fill('M11 3q3-3 4 1l-2 3-2-2z', '#222'),
    calculator: fill('M3 1h10v14H3z', '#546d7e') + fill('M4 2h8v3H4z', '#6cd4f4') + fill('M4 6h2v2H4zM7 6h2v2H7zM10 6h2v2h-2zM4 9h2v2H4zM7 9h2v2H7zM4 12h2v2H4zM7 12h2v2H7z', '#e8eef2') + fill('M10 9h2v5h-2z', '#1d3f66'),
    chevron: line('M4 10l4-4 4 4', '#eee', 1.5),
    mic: fill('M6 3q0-2 2-2t2 2v5q0 2-2 2t-2-2z', 'none', '#bbb') + line('M4 8q0 4 4 4t4-4M8 12v3', '#bbb'),
    wifi: line('M1 6q7-6 14 0M3.500 9q4.500-4 9 0M6 11.500q2-2 4 0', '#eee', 1.4) + circle(8, 13, 1.2, '#eee'),
    sound: line('M1.500 6h3l4-4v12l-4-4h-3zM10.500 5.500q2 2.500 0 5M12 3.500q4 4.500 0 9', '#eee', 1.1),
    bell: line('M3 12h10l-1.500-2V6q0-3.500-3.500-3.500T4.500 6v4zM6.500 13.500h3', '#ddd', 1.1)
};

document.querySelectorAll('[data-icon]').forEach(function(el) {
    const name = el.dataset.icon;
    el.insertAdjacentHTML('afterbegin', `<svg viewBox="0 0 16 16" aria-hidden="true">${icons[name]}</svg>`);
    if (el.tagName === 'BUTTON' && !el.getAttribute('aria-label') && !el.textContent.trim()) {
        el.setAttribute('aria-label', name);
    }
});
```
FILE: plan.js
```js
// Plan view: model units are feet, y grows upwards
const scale = 5.8;
const originX = 299;
const originY = 505; // from the top of the canvas

const px = x => Math.round(originX + x * scale);
const py = y => Math.round(originY - y * scale);

const xAxes = [0, 10, 25, 35];
const yAxes = { A: 0, B: 10, C: 22, D: 40 };

// [number, x1, x2, y, number centre, section start]
const beams = [
    [107, 0, 10, 68, 5.7, -2], [99, 25, 35, 68, 29.1, 27], [123, 45, 55, 68, 50.7, 43],
    [106, 0, 10, 50, 5.7, -2], [98, 25, 35, 50, 29.1, 27], [122, 45, 55, 50, 50.7, 43],
    [20, 0, 10, 40, 4.1, 2.1], [21, 10, 25, 40, 16.2, 15.6], [22, 25, 35, 40, 29.1, 27],
    [23, 0, 10, 22, 4.1, 2.1], [24, 10, 25, 22, 18.6, 9.4], [25, 25, 35, 22, 29.1, 27],
    [26, 0, 10, 10, 4.1, 2.1], [27, 10, 25, 10, 16.2, 15.6], [28, 25, 35, 10, 29.1, 27],
    [29, 0, 10, 0, 4.1, 2.1], [30, 10, 25, 0, 16.2, 15.6], [31, 25, 35, 0, 29.1, 27]
];

// [number, x, y1, y2, number centre, section start]
const cross = [
    [109, 0, 50, 68, 57.6, 57.2], [108, 10, 50, 68, 57.6, 57.2], [100, 25, 50, 68, 57.6, 57.2],
    [101, 35, 50, 68, 57.6, 57.2], [125, 45, 50, 68, 57.6, 57.2], [124, 55, 50, 68, 57.6, 57.2],
    [32, 0, 22, 40, 32.5, 22.2], [36, 10, 22, 40, 32.5, 22.2], [39, 25, 22, 40, 32.5, 22.2], [43, 35, 22, 40, 32.5, 22.2],
    [33, 0, 10, 22, 17, 8.3], [37, 10, 10, 22, 17, 8.3], [40, 25, 10, 22, 17, 8.3], [44, 35, 10, 22, 17, 8.3],
    [34, 0, 0, 10, 5.8, -2.1], [38, 10, 0, 10, 5.8, -2.1], [41, 25, 0, 10, 5.8, -2.1], [45, 35, 0, 10, 5.8, -2.1]
];

const label = v => (v === 0 ? '-0.0' : v.toFixed(1));
const text = (cls, x, y, str, turn = 0) => `<text class="${cls}" transform="translate(${x} ${y}) rotate(${turn})">${str}</text>`;

function drawRulers(w, h) {
    let ticks = '';
    let out = '';
    for (let v = -50; px(v) < w; v += 5) {
        const x = px(v) - 0.5;
        const major = v % 10 === 0 && v >= -40;
        if (v > -45) {
            ticks += `M${x} 0v${major ? 8 : 5}M${x} ${h}v${major ? -9 : -5}`;
        }
        if (major && v <= 120) {
            out += text('ruler', x, 19, label(v)) + text('ruler', x, h - 6, label(v));
        }
        for (let y = py(85); y < h - 20; y += 29) {
            out += `<rect class="dot" x="${px(v)}" y="${y}" width="1" height="1"/>`;
        }
    }
    for (let v = -5; v <= 80; v += 5) {
        const y = py(v) + 0.5;
        const major = v % 10 === 0;
        ticks += `M0 ${y}h${major ? 9 : 5}M${w} ${y}h${major ? -9 : -5}`;
        if (major) {
            out += text('ruler', 20, y, label(v), -90) + text('ruler', w - 20, y, label(v), 90);
        }
    }
    return `<path class="tick" d="${ticks}"/>` + out;
}

function drawAxes(w) {
    let out = '';
    xAxes.forEach(function(v, i) {
        const x = px(v) + 0.5;
        out += `<path class="axis" d="M${x} 72V${py(-0.5)}"/>`;
        out += `<rect class="bubble" x="${x - 14}" y="${py(0) + 2.5}" width="28" height="20" rx="10"/>`;
        out += text('bubble-text', x, py(0) + 18, i + 1);
    });
    for (const name in yAxes) {
        const y = py(yAxes[name]) + 0.5;
        out += `<path class="axis" d="M58 ${y}H${w - 59}"/>`;
        [43, w - 42].forEach(function(x) {
            out += `<rect class="bubble" x="${x - 15}" y="${y - 10}" width="30" height="20" rx="10"/>`;
            out += text('bubble-text', x, y + 5, name);
        });
    }
    return out;
}

function drawMembers() {
    let lines = '';
    let names = '';
    let numbers = '';
    let nodes = '';
    beams.forEach(function([n, x1, x2, y, at, start]) {
        lines += `<path class="member plain" d="M${px(x1)} ${py(y)}H${px(x2)}"/>`;
        names += text('section', px(start), py(y) - 3, 'GB110x15');
        numbers += text('number', px(at), py(y) - 3, n);
        [x1, x2].forEach(function(x) {
            const selected = x >= 45;
            nodes += `<rect class="node${selected ? ' selected' : ''}" x="${px(x) - 3.5}" y="${py(y) - 3.5}" width="6" height="6" stroke-width="1.6"/>`;
            nodes += selected ? '' : `<rect class="node-dot" x="${px(x) - 1.5}" y="${py(y) - 1.5}" width="2" height="2"/>`;
        });
    });
    cross.forEach(function([n, x, y1, y2, at, start]) {
        const d = `M${px(x)} ${py(y1)}V${py(y2)}`;
        lines += x < 45 ? `<path class="member" d="${d}"/><path class="member-dash" d="${d}"/>` : `<path class="member plain" d="${d}"/>`;
        names += text('section', px(x) - 3, py(start), 'GB2 10x18', -90);
        numbers += text('number', px(x) - 4, py(at), n, -90);
    });
    return lines + names + numbers + nodes;
}

// Faint course logo laid over the drawing
function drawLogo() {
    return `
        <g fill="#7f99cc" fill-opacity=".13">
            <path d="M411 83L482 44l72 39-25 10-15 10q-33-22-67 0z"/>
            <path fill-rule="evenodd" d="M479 92a98 98 0 1 0 1 0zM479 112a78 78 0 1 1-1 0z"/>
            <path d="M388 230q20 60 92 64 60 2 80-40 15 50-10 80-40 10-66-24-70-10-96-80z" fill-opacity=".08"/>
            <path d="M262 305q4-38 35-38t42 50l2 68q-30 10-38-45-44 0-41-35z" fill-opacity=".08"/>
        </g>
        <circle cx="480" cy="190" r="78" fill="#97b4ea" fill-opacity=".18"/>
        <circle cx="480" cy="190" r="49" fill="#eef3fb" fill-opacity=".45"/>
        <g fill="none" stroke="#8a93aa" stroke-opacity=".28">
            <path fill="#eec0c8" fill-opacity=".3" d="M470 216q-2-14-10-22a22 22 0 1 1 40 0q-8 8-10 22z"/>
            <path d="M475 215l-5-40M485 215l5-40M470 172q4 5 6 0 4 5 6 0 4 5 8 0M470 222h20M471 227h18"/>
            <path d="M480 140v-8M456 147l-5-7M504 147l5-7M444 166l-8-4M516 166l8-4M442 190h-9M518 190h9"/>
            <path fill="#fff" fill-opacity=".4" d="M468 230h24l-12 22z"/>
        </g>
        <text class="mark" x="353" y="389" font-size="88" fill="#8796b8" fill-opacity=".14">Learn<tspan fill="#f08098" fill-opacity=".14">ify</tspan></text>
        <text class="mark" x="511" y="463" text-anchor="middle" font-size="72" fill="#8796b8" fill-opacity=".14">[EN]</text>
        <text transform="translate(376 378) rotate(-46)" font-size="16" fill="#e0a070" fill-opacity=".28">Copyright © 2025 - www.p30download.com</text>`;
}

function drawCompass(h) {
    return `
        <g transform="translate(0 ${h - 77})">
            <path d="M1 .500H78M.500 1V76" fill="none" stroke="#e8f1ff"/>
            <path d="M78 0V76H0" fill="none" stroke="#66748c" stroke-width="2"/>
            <path d="M61.500 2.500h15v15h-15zM61.500 60.500h15v14h-15z" fill="none" stroke="#66748c"/>
            <path d="M68 4l6 11H62zM68 73l5-9H62z" fill="none" stroke="#8793a5"/>
            <path d="M30 47V31h-5l5-12 5 12h-3v16z" fill="#2f9544"/>
            <path d="M30 45h16v-3l12 6-12 5v-3H30z" fill="#2c37e8"/>
            <path d="M35.500 24.500h18v17h-18z" fill="none" stroke="#d85a62"/>
            <g font-weight="bold" font-size="12">
                <text x="30" y="18" fill="#23823a">Y</text>
                <text x="60" y="49" fill="#1c1cc8">X</text>
                <text x="30" y="49" fill="#d3202a">Z</text>
                <text x="14" y="74" fill="#d3202a">PLAN</text>
            </g>
        </g>`;
}

function draw() {
    const plan = document.getElementById('plan');
    const w = plan.clientWidth;
    const h = plan.clientHeight;
    plan.innerHTML = drawRulers(w, h) + drawAxes(w) + drawMembers() + drawLogo() + drawCompass(h) +
        `<text x="${w - 43}" y="${h - 3}" font-size="8" fill="#9aa9c4">View</text>
        <path d="M744 273v12l3-3 2 4 2-1-2-4h4z" fill="#fff" stroke="#222" stroke-width=".8"/>`;
}

draw();
window.addEventListener('resize', draw);
```
